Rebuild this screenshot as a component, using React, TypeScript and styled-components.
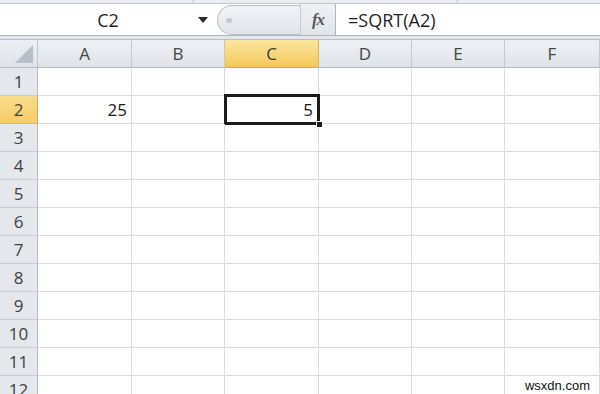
import React from "react";
import styled, { createGlobalStyle } from "styled-components";

const GlobalStyle = createGlobalStyle`
  html, body {
    margin: 0;
    padding: 0;
    background: #ffffff;
  }
  body {
    width: 600px;
    height: 394px;
    overflow: hidden;
    font-family: "Open Sans", "Noto Sans", sans-serif;
  }
`;

const Page = styled.div`
  position: relative;
  display: flex;
  flex-flow: column nowrap;
  width: 600px;
  height: 394px;
  overflow: hidden;
  background: #ffffff;

  & > * {
    flex-shrink: 0;
  }
`;

const RibbonEdge = styled.div`
  display: flex;
  height: 3px;
  background: #e9ecf0;
  border-bottom: 1px solid #c3c8cf;
`;

const RibbonTick = styled.div<{ left: number }>`
  margin-left: ${({ left }) => left}px;
  width: 1px;
  background: #c3c8cf;
`;

const FormulaBar = styled.div`
  display: flex;
  flex-flow: row nowrap;
  height: 31px;
  border-bottom: 1px solid #aeb4bc;
`;

const NameBox = styled.div`
  display: flex;
  align-items: center;
  width: 217px;
  background: #ffffff;
  color: #1f1f1f;
  font-size: 18px;
`;

const NameText = styled.span`
  flex: 1;
  text-align: center;
  padding-left: 18px;
`;

const DropArrow = styled.span`
  width: 0;
  height: 0;
  margin-right: 9px;
  border-left: 5px solid transparent;
  border-right: 5px solid transparent;
  border-top: 6px solid #2a2a2a;
`;

const Splitter = styled.div`
  display: flex;
  align-items: center;
  width: 83px;
  background: linear-gradient(#f1f3f6, #e1e5ea);
  border: 1px solid #b8bec6;
  border-right: 0;
  border-radius: 16px 0 0 16px;
  margin: 1px 0 0 0;
  box-sizing: border-box;
`;

const Grip = styled.span`
  width: 6px;
  height: 5px;
  margin-left: 8px;
  border-radius: 2px;
  background: #c4c9d0;
`;

const FxBox = styled.div`
  display: flex;
  align-items: center;
  justify-content: center;
  width: 34px;
  background: linear-gradient(#eff1f4, #e1e5ea);
  border-left: 1px solid #c7ccd3;
  border-right: 1px solid #aeb4bc;
  color: #5a5a5a;
  font-family: "Liberation Serif", "DejaVu Serif", serif;
  font-style: italic;
  font-weight: bold;
  font-size: 17px;
  letter-spacing: -1px;
`;

const FormulaInput = styled.div`
  flex: 1;
  display: flex;
  align-items: center;
  padding-left: 12px;
  background: #ffffff;
  color: #1f1f1f;
  font-size: 18px;
`;

const Gap = styled.div`
  height: 3px;
  background: #e4e7eb;
  border-bottom: 1px solid #b8bec6;
`;

const Grid = styled.div`
  display: grid;
  grid-template-columns: 38px 94px 93px 94px 93px 93px 1fr;
  grid-auto-rows: 28px;
`;

const Corner = styled.div`
  position: relative;
  background: linear-gradient(#eceff3, #dfe3e8);
  border-right: 1px solid #c2c7ce;
  border-bottom: 1px solid #b5bbc3;
  box-sizing: border-box;
`;

const CornerTriangle = styled.svg`
  position: absolute;
  right: 4px;
  bottom: 4px;
`;

const ColHead = styled.div<{ active?: boolean }>`
  display: flex;
  align-items: center;
  justify-content: center;
  box-sizing: border-box;
  font-size: 17px;
  color: ${({ active }) => (active ? "#3a3a3a" : "#454545")};
  background: ${({ active }) =>
    active
      ? "linear-gradient(#fbe6a2, #f7d57a 55%, #f3c85a)"
      : "linear-gradient(#eef1f4, #dfe3e8)"};
  border-right: 1px solid ${({ active }) => (active ? "#e2b64a" : "#c5cad1")};
  border-bottom: 1px solid ${({ active }) => (active ? "#d9a93c" : "#b5bbc3")};
`;

const RowHead = styled.div<{ active?: boolean }>`
  display: flex;
  align-items: center;
  justify-content: center;
  box-sizing: border-box;
  font-size: 17px;
  color: #3f3f3f;
  background: ${({ active }) =>
    active ? "linear-gradient(#f9dc8e, #f5cd68)" : "#e4e8ed"};
  border-right: 1px solid ${({ active }) => (active ? "#d9a93c" : "#b5bbc3")};
  border-bottom: 1px solid ${({ active }) => (active ? "#e2b64a" : "#c8cdd4")};
`;

const Cell = styled.div<{ selected?: boolean }>`
  position: relative;
  display: flex;
  align-items: center;
  justify-content: flex-end;
  padding-right: ${({ selected }) => (selected ? 5 : 4)}px;
  box-sizing: border-box;
  font-size: 17px;
  color: #1a1a1a;
  border-right: 1px solid #dadcdf;
  border-bottom: 1px solid #dadcdf;

  ${({ selected }) =>
    selected &&
    `
    &::after {
      content: "";
      position: absolute;
      left: -1px;
      top: -2px;
      right: -2px;
      bottom: -2px;
      border: 3px solid #1c1c1c;
      pointer-events: none;
    }
  `}
`;

const FillHandle = styled.span`
  position: absolute;
  right: -5px;
  bottom: -5px;
  width: 5px;
  height: 5px;
  background: #1c1c1c;
  border: 1px solid #ffffff;
  z-index: 2;
`;

const Watermark = styled.div`
  position: absolute;
  right: 10px;
  bottom: 1px;
  font-family: "Liberation Sans", Arial, sans-serif;
  font-size: 13px;
  color: #111111;
`;

const columns = ["A", "B", "C", "D", "E", "F"];
const values: Record<string, string> = { A2: "25", C2: "5" };
const selected = { col: "C", row: 2 };

export default function App() {
  const rows = Array.from({ length: 12 }, (_, i) => i + 1);

  return (
    <Page>
      <GlobalStyle />
      <RibbonEdge>
        <RibbonTick left={193} />
        <RibbonTick left={263} />
      </RibbonEdge>

      <FormulaBar>
        <NameBox>
          <NameText>C2</NameText>
          <DropArrow />
        </NameBox>
        <Splitter>
          <Grip />
        </Splitter>
        <FxBox>fx</FxBox>
        <FormulaInput>=SQRT(A2)</FormulaInput>
      </FormulaBar>

      <Gap />

      <Grid>
        <Corner>
          <CornerTriangle width="18" height="18" viewBox="0 0 18 18">
            <polygon points="18,0 18,18 0,18" fill="#b7bec8" />
          </CornerTriangle>
        </Corner>
        {columns.map((c) => (
          <ColHead key={c} active={c === selected.col}>
            {c}
          </ColHead>
        ))}

        {rows.map((r) => (
          <React.Fragment key={r}>
            <RowHead active={r === selected.row}>{r}</RowHead>
            {columns.map((c) => {
              const isSel = c === selected.col && r === selected.row;
              return (
                <Cell key={c} selected={isSel}>
                  {values[`${c}${r}`]}
                  {isSel && <FillHandle />}
                </Cell>
              );
            })}
          </React.Fragment>
        ))}
      </Grid>

      <Watermark>wsxdn.com</Watermark>
    </Page>
  );
}
